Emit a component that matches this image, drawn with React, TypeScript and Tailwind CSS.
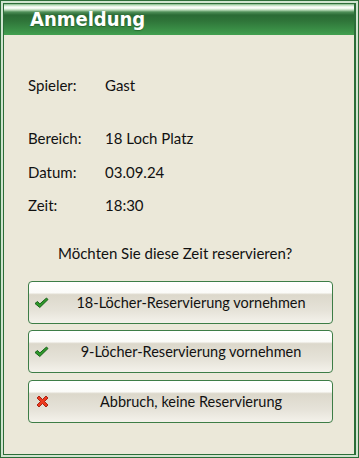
import React from "react";

function Check() {
  return (
    <svg width="15" height="12" viewBox="0 0 15 12">
      <path
        d="M1 6.5 L3.5 4.5 L5.8 7 L12.5 1 L14 2.5 L5.8 10.5 Z"
        fill="#2f9a2a"
        stroke="#17601a"
        strokeWidth="1"
        strokeLinejoin="round"
      />
    </svg>
  );
}

function Cross() {
  return (
    <svg width="13" height="13" viewBox="0 0 13 13">
      <path
        d="M1 3 L3 1 L6.5 4.5 L10 1 L12 3 L8.5 6.5 L12 10 L10 12 L6.5 8.5 L3 12 L1 10 L4.5 6.5 Z"
        fill="#ee3a1e"
        stroke="#a3180a"
        strokeWidth="0.9"
        strokeLinejoin="round"
      />
    </svg>
  );
}

function Btn({ icon, label, className }: { icon: React.ReactNode; label: string; className?: string }) {
  return (
    <div
      className={
        "flex h-[43px] w-[305px] items-center rounded-[4px] border border-[#3d7d46] bg-[linear-gradient(to_bottom,#ffffff_0%,#fbfbf8_26%,#dcd8cb_31%,#e6e3d9_70%,#f4f2eb_100%)] " +
        (className ?? "")
      }
    >
      <div className="flex w-[21px] justify-end pr-[1px]">{icon}</div>
      <div className="flex-1 text-center text-[14.5px] leading-[20px] text-[#111]">{label}</div>
    </div>
  );
}

export default function App() {
  return (
    <div
      className="h-[458px] w-[359px] border border-[#2b6d38] bg-[#cfe4cf] p-[2px]"
      style={{ fontFamily: "Lato, 'Noto Sans', sans-serif" }}
    >
      <div className="flex h-full flex-col border-l border-t border-r-2 border-b border-[#2b6d38] bg-[#ebe8d9]">
        <div className="h-[31px] bg-[linear-gradient(to_bottom,#7fb885_0px,#dff0df_2px,#ffffff_4px,#b6d8b6_6px,#4f8f58_8px,#2b6a35_11px,#2f7539_17px,#3d954a_28px,#42a050_31px)] pl-[26px]">
          <div
            className="text-[20px] font-bold leading-[31px] text-white [text-shadow:0_1px_1px_rgba(0,40,0,0.35)]"
            style={{ fontFamily: "'DejaVu Sans Condensed', 'DejaVu Sans', Verdana, sans-serif" }}
          >
            Anmeldung
          </div>
        </div>
        <div className="flex flex-col pl-[24px] text-[15px] leading-[20px] text-[#111]">
          <div className="mt-[40px] flex">
            <div className="w-[77px]">Spieler:</div>
            <div>Gast</div>
          </div>
          <div className="mt-[33px] flex">
            <div className="w-[77px]">Bereich:</div>
            <div>18 Loch Platz</div>
          </div>
          <div className="mt-[14px] flex">
            <div className="w-[77px]">Datum:</div>
            <div>03.09.24</div>
          </div>
          <div className="mt-[13px] flex">
            <div className="w-[77px]">Zeit:</div>
            <div>18:30</div>
          </div>
        </div>
        <div className="mt-[28px] pl-[54px] text-[15px] leading-[20px] text-[#111]">Möchten Sie diese Zeit reservieren?</div>
        <div className="mt-[18px] flex flex-col pl-[24px]">
          <Btn icon={<Check />} label="18-Löcher-Reservierung vornehmen" />
          <Btn icon={<Check />} label="9-Löcher-Reservierung vornehmen" className="mt-[6px]" />
          <Btn icon={<Cross />} label="Abbruch, keine Reservierung" className="mt-[7px]" />
        </div>
      </div>
    </div>
  );
}
